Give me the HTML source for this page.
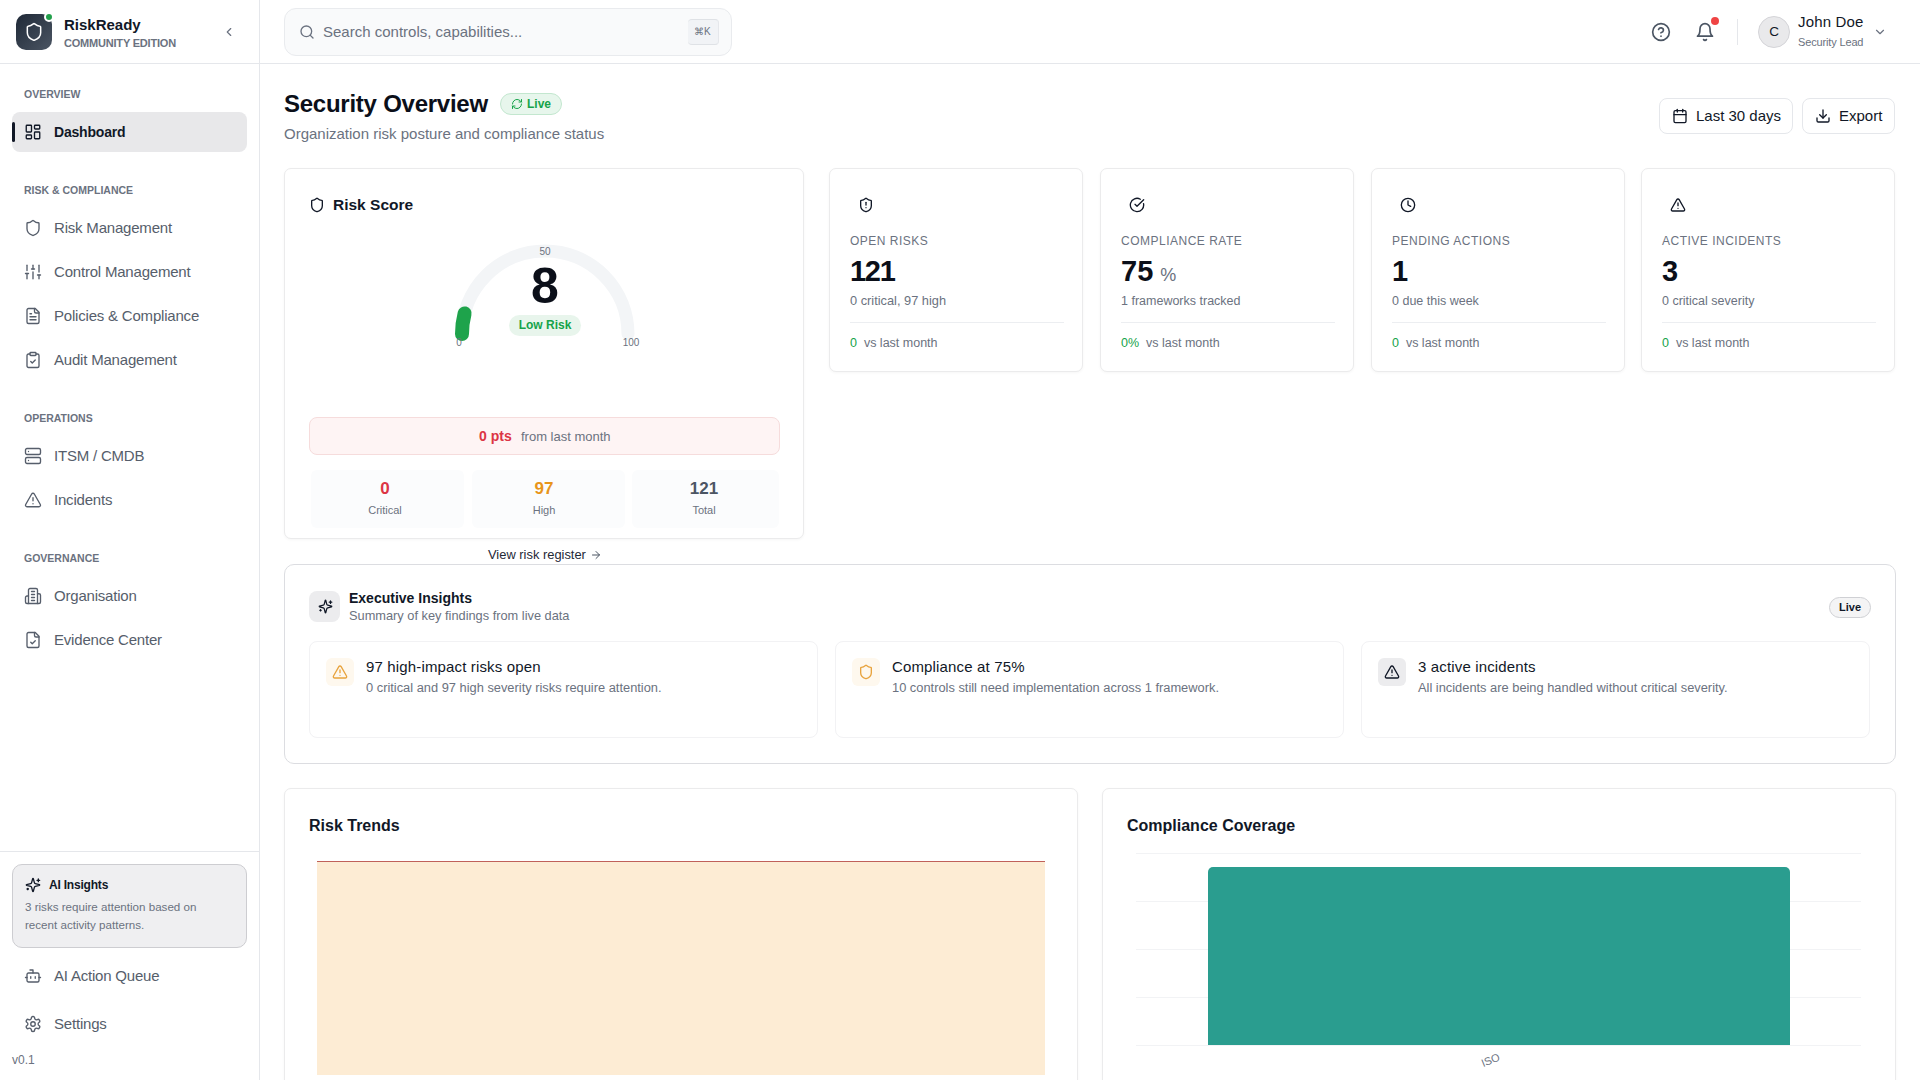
<!DOCTYPE html>
<html><head><meta charset="utf-8">
<style>
*{box-sizing:border-box;margin:0;padding:0}
html,body{width:1920px;height:1080px;overflow:hidden;background:#fff;font-family:"Liberation Sans",sans-serif;color:#111827}
.abs{position:absolute}
svg.i{position:absolute;fill:none;stroke:currentColor;stroke-width:2;stroke-linecap:round;stroke-linejoin:round}
#sb{position:absolute;left:0;top:0;width:260px;height:1080px;background:#fff;border-right:1px solid #e5e7eb}
.sec{position:absolute;left:24px;font-size:10.5px;font-weight:700;letter-spacing:0px;color:#6b7280;text-transform:uppercase}
.nav{position:absolute;left:12px;width:235px;height:40px;border-radius:10px;color:#565e6b;font-size:15px}
.nav svg{left:12px;top:11px;stroke-width:1.8}
.nav span{position:absolute;left:42px;top:11px;line-height:18px;white-space:nowrap;letter-spacing:-0.2px}
#hdr{position:absolute;left:260px;top:0;width:1660px;height:64px;border-bottom:1px solid #e5e7eb;background:#fff}
.card{position:absolute;background:#fff;border:1px solid #ebebec;border-radius:7px;box-shadow:0 1px 3px rgba(0,0,0,0.04)}
.t{position:absolute;white-space:nowrap}
</style></head>
<body>
<!-- SIDEBAR -->
<div id="sb">
  <div class="abs" style="left:0;top:63px;width:259px;height:1px;background:#e5e7eb"></div>
  <div class="abs" style="left:16px;top:14px;width:36px;height:36px;border-radius:10px;background:linear-gradient(135deg,#1f2937,#4b5563)"></div>
  <svg class="i" style="left:24px;top:22px;color:#fff;stroke-width:1.8" width="20" height="20" viewBox="0 0 24 24"><path d="M20 13c0 5-3.5 7.5-7.66 8.95a1 1 0 0 1-.67-.01C7.5 20.5 4 18 4 13V6a1 1 0 0 1 1-1c2 0 4.5-1.2 6.240-2.72a1.17 1.17 0 0 1 1.52 0C14.51 3.81 17 5 19 5a1 1 0 0 1 1 1z"/></svg>
  <div class="abs" style="left:44px;top:12px;width:10px;height:10px;border-radius:50%;background:#22a04b;border:2px solid #fff"></div>
  <div class="t" style="left:64px;top:16px;font-size:15px;font-weight:700;color:#111827">RiskReady</div>
  <div class="t" style="left:64px;top:37px;font-size:11px;font-weight:700;color:#6b7280;letter-spacing:-0.2px">COMMUNITY EDITION</div>
  <svg class="i" style="left:222px;top:25px;color:#6b7280" width="14" height="14" viewBox="0 0 24 24"><path d="m15 18-6-6 6-6"/></svg>

  <div class="sec" style="top:88px">Overview</div>
  <div class="nav" style="top:112px;background:#e8e8ea;color:#111827;font-weight:700;border-radius:8px">
    <div class="abs" style="left:0;top:10px;width:3px;height:20px;background:#111827;border-radius:2px"></div>
    <svg class="i" width="18" height="18" viewBox="0 0 24 24"><rect width="7" height="9" x="3" y="3" rx="1"/><rect width="7" height="5" x="14" y="3" rx="1"/><rect width="7" height="9" x="14" y="12" rx="1"/><rect width="7" height="5" x="3" y="16" rx="1"/></svg>
    <span style="font-size:14px;letter-spacing:-0.2px">Dashboard</span>
  </div>

  <div class="sec" style="top:184px">Risk &amp; Compliance</div>
  <div class="nav" style="top:208px">
    <svg class="i" width="18" height="18" viewBox="0 0 24 24"><path d="M20 13c0 5-3.5 7.5-7.66 8.95a1 1 0 0 1-.67-.01C7.5 20.5 4 18 4 13V6a1 1 0 0 1 1-1c2 0 4.5-1.2 6.24-2.72a1.17 1.17 0 0 1 1.52 0C14.51 3.81 17 5 19 5a1 1 0 0 1 1 1z"/></svg>
    <span>Risk Management</span>
  </div>
  <div class="nav" style="top:252px">
    <svg class="i" width="18" height="18" viewBox="0 0 24 24"><line x1="4" x2="4" y1="21" y2="14"/><line x1="4" x2="4" y1="10" y2="3"/><line x1="12" x2="12" y1="21" y2="12"/><line x1="12" x2="12" y1="8" y2="3"/><line x1="20" x2="20" y1="21" y2="16"/><line x1="20" x2="20" y1="12" y2="3"/><line x1="2" x2="6" y1="14" y2="14"/><line x1="10" x2="14" y1="8" y2="8"/><line x1="18" x2="22" y1="16" y2="16"/></svg>
    <span>Control Management</span>
  </div>
  <div class="nav" style="top:296px">
    <svg class="i" width="18" height="18" viewBox="0 0 24 24"><path d="M15 2H6a2 2 0 0 0-2 2v16a2 2 0 0 0 2 2h12a2 2 0 0 0 2-2V7Z"/><path d="M14 2v4a2 2 0 0 0 2 2h4"/><path d="M10 9H8"/><path d="M16 13H8"/><path d="M16 17H8"/></svg>
    <span>Policies &amp; Compliance</span>
  </div>
  <div class="nav" style="top:340px">
    <svg class="i" width="18" height="18" viewBox="0 0 24 24"><rect width="8" height="4" x="8" y="2" rx="1" ry="1"/><path d="M16 4h2a2 2 0 0 1 2 2v14a2 2 0 0 1-2 2H6a2 2 0 0 1-2-2V6a2 2 0 0 1 2-2h2"/><path d="m9 14 2 2 4-4"/></svg>
    <span>Audit Management</span>
  </div>

  <div class="sec" style="top:412px">Operations</div>
  <div class="nav" style="top:436px">
    <svg class="i" width="18" height="18" viewBox="0 0 24 24"><rect width="20" height="8" x="2" y="2" rx="2" ry="2"/><rect width="20" height="8" x="2" y="14" rx="2" ry="2"/><line x1="6" x2="6.01" y1="6" y2="6"/><line x1="6" x2="6.01" y1="18" y2="18"/></svg>
    <span>ITSM / CMDB</span>
  </div>
  <div class="nav" style="top:480px">
    <svg class="i" width="18" height="18" viewBox="0 0 24 24"><path d="m21.73 18-8-14a2 2 0 0 0-3.48 0l-8 14A2 2 0 0 0 4 21h16a2 2 0 0 0 1.73-3"/><path d="M12 9v4"/><path d="M12 17h.01"/></svg>
    <span>Incidents</span>
  </div>

  <div class="sec" style="top:552px">Governance</div>
  <div class="nav" style="top:576px">
    <svg class="i" width="18" height="18" viewBox="0 0 24 24"><path d="M6 22V4a2 2 0 0 1 2-2h8a2 2 0 0 1 2 2v18Z"/><path d="M6 12H4a2 2 0 0 0-2 2v6a2 2 0 0 0 2 2h2"/><path d="M18 9h2a2 2 0 0 1 2 2v9a2 2 0 0 1-2 2h-2"/><path d="M10 6h4"/><path d="M10 10h4"/><path d="M10 14h4"/><path d="M10 18h4"/></svg>
    <span>Organisation</span>
  </div>
  <div class="nav" style="top:620px">
    <svg class="i" width="18" height="18" viewBox="0 0 24 24"><path d="M15 2H6a2 2 0 0 0-2 2v16a2 2 0 0 0 2 2h12a2 2 0 0 0 2-2V7Z"/><path d="M14 2v4a2 2 0 0 0 2 2h4"/><path d="m9 15 2 2 4-4"/></svg>
    <span>Evidence Center</span>
  </div>

  <div class="abs" style="left:0;top:851px;width:259px;height:1px;background:#e5e7eb"></div>
  <div class="abs" style="left:12px;top:864px;width:235px;height:84px;border-radius:10px;background:#efeff1;border:1px solid #cdcdd1"></div>
  <svg class="i" style="left:25px;top:877px;color:#111827" width="16" height="16" viewBox="0 0 24 24"><path d="M9.937 15.5A2 2 0 0 0 8.5 14.063l-6.135-1.582a.5.5 0 0 1 0-.962L8.5 9.936A2 2 0 0 0 9.937 8.5l1.582-6.135a.5.5 0 0 1 .963 0L14.063 8.5A2 2 0 0 0 15.5 9.937l6.135 1.581a.5.5 0 0 1 0 .964L15.5 14.063a2 2 0 0 0-1.437 1.437l-1.582 6.135a.5.5 0 0 1-.963 0z"/><path d="M20 3v4"/><path d="M22 5h-4"/><path d="M4 17v2"/><path d="M5 18H3"/></svg>
  <div class="t" style="left:49px;top:878px;font-size:12px;font-weight:700;letter-spacing:-0.2px;color:#111827">AI Insights</div>
  <div class="t" style="left:25px;top:898px;font-size:11.6px;line-height:18px;color:#6b7280;white-space:normal;width:190px">3 risks require attention based on recent activity patterns.</div>

  <div class="nav" style="top:956px">
    <svg class="i" width="18" height="18" viewBox="0 0 24 24"><path d="M12 8V4H8"/><rect width="16" height="12" x="4" y="8" rx="2"/><path d="M2 14h2"/><path d="M20 14h2"/><path d="M15 13v2"/><path d="M9 13v2"/></svg>
    <span>AI Action Queue</span>
  </div>
  <div class="nav" style="top:1004px">
    <svg class="i" width="18" height="18" viewBox="0 0 24 24"><path d="M12.22 2h-.44a2 2 0 0 0-2 2v.18a2 2 0 0 1-1 1.73l-.43.25a2 2 0 0 1-2 0l-.15-.08a2 2 0 0 0-2.730.73l-.22.38a2 2 0 0 0 .73 2.73l.15.1a2 2 0 0 1 1 1.72v.51a2 2 0 0 1-1 1.74l-.15.09a2 2 0 0 0-.73 2.73l.22.38a2 2 0 0 0 2.73.73l.15-.08a2 2 0 0 1 2 0l.43.25a2 2 0 0 1 1 1.73V20a2 2 0 0 0 2 2h.44a2 2 0 0 0 2-2v-.18a2 2 0 0 1 1-1.73l.43-.25a2 2 0 0 1 2 0l.15.08a2 2 0 0 0 2.73-.73l.22-.39a2 2 0 0 0-.73-2.73l-.15-.08a2 2 0 0 1-1-1.74v-.5a2 2 0 0 1 1-1.740l.15-.09a2 2 0 0 0 .73-2.73l-.22-.38a2 2 0 0 0-2.73-.73l-.15.08a2 2 0 0 1-2 0l-.43-.25a2 2 0 0 1-1-1.73V4a2 2 0 0 0-2-2z"/><circle cx="12" cy="12" r="3"/></svg>
    <span>Settings</span>
  </div>
  <div class="t" style="left:12px;top:1053px;font-size:12px;color:#6b7280">v0.1</div>
</div>

<!-- HEADER -->
<div id="hdr">
  <div class="abs" style="left:24px;top:8px;width:448px;height:48px;border-radius:12px;background:#f9fafb;border:1px solid #e9ebee"></div>
  <svg class="i" style="left:39px;top:24px;color:#6b7280" width="16" height="16" viewBox="0 0 24 24"><circle cx="11" cy="11" r="8"/><path d="m21 21-4.3-4.3"/></svg>
  <div class="t" style="left:63px;top:23px;font-size:15px;line-height:17px;color:#6b7280">Search controls, capabilities...</div>
  <div class="abs" style="left:428px;top:19px;width:31px;height:26px;border-radius:4px;background:#f1f3f6;border-top:1px solid #dfe2e6;border-bottom:1px solid #dfe2e6;border-right:1px solid #e5e7eb"></div>
  <div class="t" style="left:434px;top:26px;font-size:10px;line-height:12px;color:#6b7280">&#8984;K</div>

  <svg class="i" style="left:1391px;top:22px;color:#4b5563" width="20" height="20" viewBox="0 0 24 24"><circle cx="12" cy="12" r="10"/><path d="M9.09 9a3 3 0 0 1 5.83 1c0 2-3 3-3 3"/><path d="M12 17h.01"/></svg>
  <svg class="i" style="left:1435px;top:22px;color:#4b5563" width="20" height="20" viewBox="0 0 24 24"><path d="M6 8a6 6 0 0 1 12 0c0 7 3 9 3 9H3s3-2 3-9"/><path d="M10.3 21a1.94 1.94 0 0 0 3.4 0"/></svg>
  <div class="abs" style="left:1451px;top:17px;width:8px;height:8px;border-radius:50%;background:#ef4444"></div>
  <div class="abs" style="left:1477px;top:19px;width:1px;height:26px;background:#e5e7eb"></div>
  <div class="abs" style="left:1498px;top:16px;width:32px;height:32px;border-radius:50%;background:#e9e9eb;border:1px solid #d4d4d8"></div>
  <div class="t" style="left:1498px;top:24px;width:32px;text-align:center;font-size:13.5px;line-height:16px;font-weight:400;color:#111827">C</div>
  <div class="t" style="left:1538px;top:14px;font-size:15px;letter-spacing:0.15px;line-height:16px;color:#111827">John Doe</div>
  <div class="t" style="left:1538px;top:36px;font-size:11px;line-height:12px;letter-spacing:-0.15px;color:#6b7280">Security Lead</div>
  <svg class="i" style="left:1613px;top:25px;color:#6b7280" width="14" height="14" viewBox="0 0 24 24"><path d="m6 9 6 6 6-6"/></svg>
</div>

<!-- MAIN -->
<div id="main">
  <div class="t" style="left:284px;top:90px;font-size:24px;line-height:28px;font-weight:700;letter-spacing:-0.25px;color:#0b0f19">Security Overview</div>
  <div class="abs" style="left:500px;top:93px;width:62px;height:22px;border-radius:11px;background:#e7f6ec;border:1px solid #c3e7cf"></div>
  <svg class="i" style="left:511px;top:98px;color:#16a34a" width="12" height="12" viewBox="0 0 24 24"><path d="M3 12a9 9 0 0 1 9-9 9.75 9.75 0 0 1 6.74 2.74L21 8"/><path d="M21 3v5h-5"/><path d="M21 12a9 9 0 0 1-9 9 9.75 9.75 0 0 1-6.74-2.74L3 16"/><path d="M8 16H3v5"/></svg>
  <div class="t" style="left:527px;top:97px;font-size:12px;line-height:14px;font-weight:700;color:#16a34a">Live</div>
  <div class="t" style="left:284px;top:125px;font-size:15px;line-height:17px;color:#6b7280">Organization risk posture and compliance status</div>

  <div class="abs" style="left:1659px;top:98px;width:134px;height:36px;border-radius:8px;background:#fff;border:1px solid #e5e7eb"></div>
  <svg class="i" style="left:1672px;top:108px;color:#111827" width="16" height="16" viewBox="0 0 24 24"><path d="M8 2v4"/><path d="M16 2v4"/><rect width="18" height="18" x="3" y="4" rx="2"/><path d="M3 10h18"/></svg>
  <div class="t" style="left:1696px;top:107px;font-size:15px;line-height:17px;color:#111827">Last 30 days</div>
  <div class="abs" style="left:1802px;top:98px;width:93px;height:36px;border-radius:8px;background:#fff;border:1px solid #e5e7eb"></div>
  <svg class="i" style="left:1815px;top:108px;color:#111827" width="16" height="16" viewBox="0 0 24 24"><path d="M21 15v4a2 2 0 0 1-2 2H5a2 2 0 0 1-2-2v-4"/><polyline points="7 10 12 15 17 10"/><line x1="12" x2="12" y1="15" y2="3"/></svg>
  <div class="t" style="left:1839px;top:107px;font-size:15px;line-height:17px;color:#111827">Export</div>

  <!-- RISK SCORE CARD -->
  <div class="card" style="left:284px;top:168px;width:520px;height:371px"></div>
  <svg class="i" style="left:309px;top:197px;color:#111827;stroke-width:2" width="16" height="16" viewBox="0 0 24 24"><path d="M20 13c0 5-3.5 7.5-7.66 8.95a1 1 0 0 1-.67-.01C7.5 20.5 4 18 4 13V6a1 1 0 0 1 1-1c2 0 4.5-1.2 6.24-2.72a1.17 1.17 0 0 1 1.52 0C14.51 3.81 17 5 19 5a1 1 0 0 1 1 1z"/></svg>
  <div class="t" style="left:333px;top:196px;font-size:15.5px;line-height:18px;font-weight:700;color:#111827">Risk Score</div>
  <svg class="abs" style="left:445px;top:234px" width="200" height="120" viewBox="0 0 200 120">
    <path d="M17 100 A83 83 0 0 1 183 100" fill="none" stroke="#f3f5f7" stroke-width="13" stroke-linecap="round"/>
    <path d="M17 100 A83 83 0 0 1 19.6 79.4" fill="none" stroke="#1ea34b" stroke-width="14" stroke-linecap="round"/>
  </svg>
  <div class="t" style="left:530px;top:247px;width:30px;text-align:center;font-size:10px;line-height:10px;color:#6b7280">50</div>
  <div class="t" style="left:444px;top:338px;width:30px;text-align:center;font-size:10px;line-height:10px;color:#6b7280">0</div>
  <div class="t" style="left:616px;top:338px;width:30px;text-align:center;font-size:10px;line-height:10px;color:#6b7280">100</div>
  <div class="t" style="left:495px;top:258px;width:100px;text-align:center;font-size:50px;line-height:56px;font-weight:700;color:#0b0f19">8</div>
  <div class="abs" style="left:509px;top:315px;width:72px;height:21px;border-radius:11px;background:#e8f5ec"></div>
  <div class="t" style="left:509px;top:318px;width:72px;text-align:center;font-size:12px;line-height:14px;font-weight:700;color:#16a34a">Low Risk</div>
  <div class="abs" style="left:309px;top:417px;width:471px;height:38px;border-radius:8px;background:#fef4f4;border:1px solid #f6dcdc"></div>
  <div class="t" style="left:479px;top:428px;font-size:14px;line-height:16px;font-weight:700;color:#dc3545">0 pts</div>
  <div class="t" style="left:521px;top:429px;font-size:13px;line-height:15px;color:#6b7280">from last month</div>
  <div class="abs" style="left:311px;top:470px;width:153px;height:58px;border-radius:6px;background:#fbfcfd"></div>
  <div class="abs" style="left:472px;top:470px;width:153px;height:58px;border-radius:6px;background:#fbfcfd"></div>
  <div class="abs" style="left:632px;top:470px;width:147px;height:58px;border-radius:6px;background:#fbfcfd"></div>
  <div class="t" style="left:311px;top:479px;width:148px;text-align:center;font-size:17px;line-height:19px;font-weight:700;color:#dc3545">0</div>
  <div class="t" style="left:311px;top:504px;width:148px;text-align:center;font-size:11px;line-height:12px;color:#6b7280">Critical</div>
  <div class="t" style="left:470px;top:479px;width:148px;text-align:center;font-size:17px;line-height:19px;font-weight:700;color:#e8951a">97</div>
  <div class="t" style="left:470px;top:504px;width:148px;text-align:center;font-size:11px;line-height:12px;color:#6b7280">High</div>
  <div class="t" style="left:630px;top:479px;width:148px;text-align:center;font-size:17px;line-height:19px;font-weight:700;color:#4b5563">121</div>
  <div class="t" style="left:630px;top:504px;width:148px;text-align:center;font-size:11px;line-height:12px;color:#6b7280">Total</div>
  <div class="t" style="left:488px;top:548px;font-size:12.9px;line-height:14px;color:#1f2937">View risk register</div>
  <svg class="i" style="left:590px;top:549px;color:#4b5563" width="12" height="12" viewBox="0 0 24 24"><path d="M5 12h14"/><path d="m12 5 7 7-7 7"/></svg>

  <div class="card" style="left:829px;top:168px;width:254px;height:204px"></div>
  <svg class="i" style="left:858px;top:197px;color:#111827" width="16" height="16" viewBox="0 0 24 24"><path d="M20 13c0 5-3.5 7.5-7.66 8.95a1 1 0 0 1-.67-.01C7.5 20.5 4 18 4 13V6a1 1 0 0 1 1-1c2 0 4.5-1.2 6.24-2.72a1.17 1.17 0 0 1 1.52 0C14.51 3.81 17 5 19 5a1 1 0 0 1 1 1z"/><path d="M12 8v4"/><path d="M12 16h.01"/></svg>
  <div class="t" style="left:850px;top:234px;font-size:12px;line-height:14px;letter-spacing:0.5px;color:#6b7280">OPEN RISKS</div>
  <div class="t" style="left:850px;top:254px;font-size:29px;line-height:34px;font-weight:700;letter-spacing:-1.3px;color:#0b0f19">121</div>
  <div class="t" style="left:850px;top:294px;font-size:12.8px;line-height:14px;color:#6b7280">0 critical, 97 high</div>
  <div class="abs" style="left:850px;top:322px;width:214px;height:1px;background:#eceef1"></div>
  <div class="t" style="left:850px;top:336px;font-size:12.5px;line-height:14px;color:#6b7280"><span style="color:#16a34a">0</span>&nbsp; vs last month</div>

  <div class="card" style="left:1100px;top:168px;width:254px;height:204px"></div>
  <svg class="i" style="left:1129px;top:197px;color:#111827" width="16" height="16" viewBox="0 0 24 24"><path d="M21.801 10A10 10 0 1 1 17 3.335"/><path d="m9 11 3 3L22 4"/></svg>
  <div class="t" style="left:1121px;top:234px;font-size:12px;line-height:14px;letter-spacing:0.5px;color:#6b7280">COMPLIANCE RATE</div>
  <div class="t" style="left:1121px;top:254px;font-size:29px;line-height:34px;font-weight:700;letter-spacing:0px;color:#0b0f19">75<span style="font-size:18px;font-weight:400;color:#6b7280;letter-spacing:0;margin-left:7px">%</span></div>
  <div class="t" style="left:1121px;top:294px;font-size:12.5px;line-height:14px;color:#6b7280">1 frameworks tracked</div>
  <div class="abs" style="left:1121px;top:322px;width:214px;height:1px;background:#eceef1"></div>
  <div class="t" style="left:1121px;top:336px;font-size:12.5px;line-height:14px;color:#6b7280"><span style="color:#16a34a">0%</span>&nbsp; vs last month</div>

  <div class="card" style="left:1371px;top:168px;width:254px;height:204px"></div>
  <svg class="i" style="left:1400px;top:197px;color:#111827" width="16" height="16" viewBox="0 0 24 24"><circle cx="12" cy="12" r="10"/><polyline points="12 6 12 12 16 14"/></svg>
  <div class="t" style="left:1392px;top:234px;font-size:12px;line-height:14px;letter-spacing:0.5px;color:#6b7280">PENDING ACTIONS</div>
  <div class="t" style="left:1392px;top:254px;font-size:29px;line-height:34px;font-weight:700;letter-spacing:0px;color:#0b0f19">1</div>
  <div class="t" style="left:1392px;top:294px;font-size:12.5px;line-height:14px;color:#6b7280">0 due this week</div>
  <div class="abs" style="left:1392px;top:322px;width:214px;height:1px;background:#eceef1"></div>
  <div class="t" style="left:1392px;top:336px;font-size:12.5px;line-height:14px;color:#6b7280"><span style="color:#16a34a">0</span>&nbsp; vs last month</div>

  <div class="card" style="left:1641px;top:168px;width:254px;height:204px"></div>
  <svg class="i" style="left:1670px;top:197px;color:#111827" width="16" height="16" viewBox="0 0 24 24"><path d="m21.73 18-8-14a2 2 0 0 0-3.48 0l-8 14A2 2 0 0 0 4 21h16a2 2 0 0 0 1.73-3"/><path d="M12 9v4"/><path d="M12 17h.01"/></svg>
  <div class="t" style="left:1662px;top:234px;font-size:12px;line-height:14px;letter-spacing:0.5px;color:#6b7280">ACTIVE INCIDENTS</div>
  <div class="t" style="left:1662px;top:254px;font-size:29px;line-height:34px;font-weight:700;letter-spacing:0px;color:#0b0f19">3</div>
  <div class="t" style="left:1662px;top:294px;font-size:12.5px;line-height:14px;color:#6b7280">0 critical severity</div>
  <div class="abs" style="left:1662px;top:322px;width:214px;height:1px;background:#eceef1"></div>
  <div class="t" style="left:1662px;top:336px;font-size:12.5px;line-height:14px;color:#6b7280"><span style="color:#16a34a">0</span>&nbsp; vs last month</div>

  <!-- EXEC INSIGHTS -->
  <div class="abs" style="left:284px;top:564px;width:1612px;height:200px;border-radius:10px;border:1px solid #dcdde1;background:#fff"></div>
  <div class="abs" style="left:309px;top:591px;width:31px;height:31px;border-radius:8px;background:#ececee"></div>
  <svg class="i" style="left:318px;top:599px;color:#111827" width="15" height="15" viewBox="0 0 24 24"><path d="M9.937 15.5A2 2 0 0 0 8.5 14.063l-6.135-1.582a.5.5 0 0 1 0-.962L8.5 9.936A2 2 0 0 0 9.937 8.5l1.582-6.135a.5.5 0 0 1 .963 0L14.063 8.5A2 2 0 0 0 15.5 9.937l6.135 1.581a.5.5 0 0 1 0 .964L15.5 14.063a2 2 0 0 0-1.437 1.437l-1.582 6.135a.5.5 0 0 1-.963 0z"/><path d="M20 3v4"/><path d="M22 5h-4"/><path d="M4 17v2"/><path d="M5 18H3"/></svg>
  <div class="t" style="left:349px;top:590px;font-size:14px;line-height:17px;font-weight:700;color:#111827">Executive Insights</div>
  <div class="t" style="left:349px;top:609px;font-size:12.8px;line-height:14px;color:#6b7280">Summary of key findings from live data</div>
  <div class="abs" style="left:1829px;top:597px;width:42px;height:21px;border-radius:11px;background:#f4f4f5;border:1px solid #cfd0d4"></div>
  <div class="t" style="left:1829px;top:601px;width:42px;text-align:center;font-size:11px;line-height:13px;font-weight:700;color:#111827">Live</div>

  <div class="abs" style="left:309px;top:641px;width:509px;height:97px;border-radius:8px;border:1px solid #f2f2f4;background:#fff"></div>
  <div class="abs" style="left:326px;top:658px;width:28px;height:28px;border-radius:6px;background:#fef8ee"></div>
  <svg class="i" style="left:332px;top:664px;color:#e8a33d" width="16" height="16" viewBox="0 0 24 24"><path d="m21.73 18-8-14a2 2 0 0 0-3.48 0l-8 14A2 2 0 0 0 4 21h16a2 2 0 0 0 1.73-3"/><path d="M12 9v4"/><path d="M12 17h.01"/></svg>
  <div class="t" style="left:366px;top:659px;font-size:15px;letter-spacing:0.15px;line-height:16px;color:#111827">97 high-impact risks open</div>
  <div class="t" style="left:366px;top:681px;font-size:12.85px;line-height:14px;color:#6b7280">0 critical and 97 high severity risks require attention.</div>

  <div class="abs" style="left:835px;top:641px;width:509px;height:97px;border-radius:8px;border:1px solid #f2f2f4;background:#fff"></div>
  <div class="abs" style="left:852px;top:658px;width:28px;height:28px;border-radius:6px;background:#fef8ee"></div>
  <svg class="i" style="left:858px;top:664px;color:#e8a33d" width="16" height="16" viewBox="0 0 24 24"><path d="M20 13c0 5-3.5 7.5-7.66 8.95a1 1 0 0 1-.67-.01C7.5 20.5 4 18 4 13V6a1 1 0 0 1 1-1c2 0 4.5-1.2 6.24-2.72a1.17 1.17 0 0 1 1.52 0C14.51 3.81 17 5 19 5a1 1 0 0 1 1 1z"/></svg>
  <div class="t" style="left:892px;top:659px;font-size:15px;letter-spacing:0.15px;line-height:16px;color:#111827">Compliance at 75%</div>
  <div class="t" style="left:892px;top:681px;font-size:12.85px;line-height:14px;color:#6b7280">10 controls still need implementation across 1 framework.</div>

  <div class="abs" style="left:1361px;top:641px;width:509px;height:97px;border-radius:8px;border:1px solid #f2f2f4;background:#fff"></div>
  <div class="abs" style="left:1378px;top:658px;width:28px;height:28px;border-radius:6px;background:#ececee"></div>
  <svg class="i" style="left:1384px;top:664px;color:#111827" width="16" height="16" viewBox="0 0 24 24"><path d="m21.73 18-8-14a2 2 0 0 0-3.48 0l-8 14A2 2 0 0 0 4 21h16a2 2 0 0 0 1.73-3"/><path d="M12 9v4"/><path d="M12 17h.01"/></svg>
  <div class="t" style="left:1418px;top:659px;font-size:15px;letter-spacing:0.15px;line-height:16px;color:#111827">3 active incidents</div>
  <div class="t" style="left:1418px;top:681px;font-size:12.85px;line-height:14px;color:#6b7280">All incidents are being handled without critical severity.</div>

  <!-- CHARTS -->
  <div class="card" style="left:284px;top:788px;width:794px;height:320px"></div>
  <div class="t" style="left:309px;top:817px;font-size:16px;line-height:18px;font-weight:700;color:#111827">Risk Trends</div>
  <div class="abs" style="left:317px;top:861px;width:728px;height:214px;background:#fdebd3;border-top:1px solid #c0615a;background:#fdecd4"></div>
  <div class="card" style="left:1102px;top:788px;width:794px;height:320px"></div>
  <div class="t" style="left:1127px;top:817px;font-size:16px;line-height:18px;font-weight:700;color:#111827">Compliance Coverage</div>
  <div class="abs" style="left:1136px;top:853px;width:725px;height:1px;background:#f2f3f5"></div>
  <div class="abs" style="left:1136px;top:901px;width:725px;height:1px;background:#f2f3f5"></div>
  <div class="abs" style="left:1136px;top:949px;width:725px;height:1px;background:#f2f3f5"></div>
  <div class="abs" style="left:1136px;top:997px;width:725px;height:1px;background:#f2f3f5"></div>
  <div class="abs" style="left:1136px;top:1045px;width:725px;height:1px;background:#f2f3f5"></div>
  <div class="abs" style="left:1208px;top:867px;width:582px;height:178px;background:#2a9d8f;border-radius:5px 5px 0 0"></div>
  <div class="t" style="left:1481px;top:1054px;font-size:11px;line-height:12px;color:#6b7280;transform:rotate(-22deg);transform-origin:50% 50%">ISO</div>
</div>
</body></html>
